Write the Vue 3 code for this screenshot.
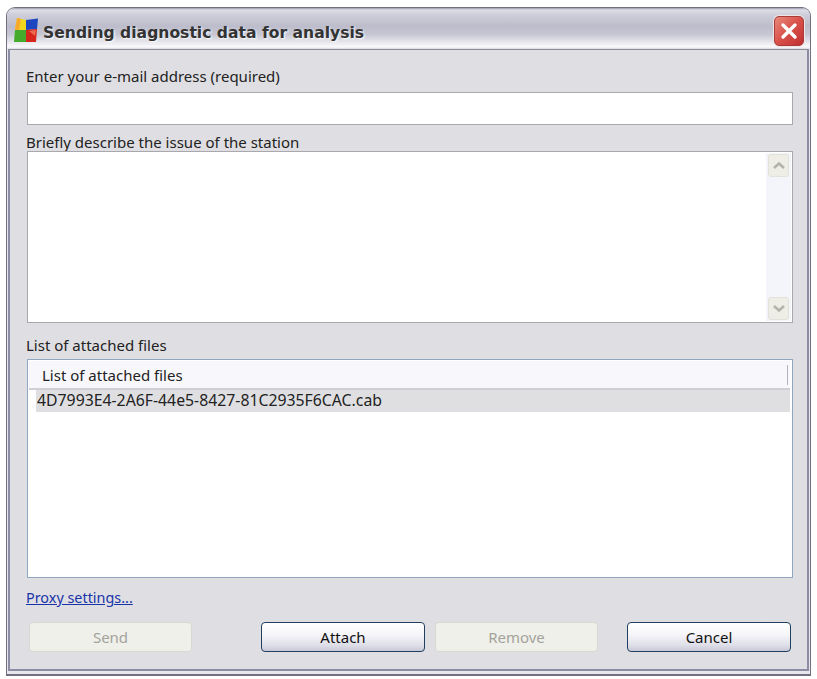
<script setup>
const files = ['4D7993E4-2A6F-44e5-8427-81C2935F6CAC.cab']
</script>

<template>
  <div class="page">
    <div class="window">
      <header class="titlebar">
        <svg class="logo" width="24" height="25" viewBox="0 0 24 25">
          <path d="M3 0 L12 2 L12 12 L1 12 Z" fill="#f2d61e" />
          <path d="M3 0 L7 1 L5 12 L1 12 Z" fill="#f7a92c" />
          <path d="M12 2 L24 0.5 L23 11 L12 12 Z" fill="#1c45c0" />
          <path d="M1 12 L12 12 L12 24 L0 24 Z" fill="#45ab2c" />
          <path d="M12 12 L23 11 L22 24 L12 24 Z" fill="#d6261c" />
          <path d="M15 13 L22 12 L21 18 Z" fill="#ee6a4c" />
        </svg>
        <span class="title">Sending diagnostic data for analysis</span>
        <button class="close" aria-label="Close">
          <svg width="22" height="22" viewBox="0 0 22 22">
            <path d="M5 5 L17 17 M17 5 L5 17" stroke="#fff" stroke-width="3.4" stroke-linecap="round" />
          </svg>
        </button>
      </header>

      <main class="body">
        <label class="label first">Enter your e-mail address (required)</label>
        <input class="field email" type="text" />

        <label class="label second">Briefly describe the issue of the station</label>
        <div class="field memo">
          <div class="scroll">
            <span class="scrollbtn">
              <svg width="14" height="9" viewBox="0 0 14 9"><path d="M2 7 L7 2.5 L12 7" fill="none" stroke="#b4b4ac" stroke-width="2.6" /></svg>
            </span>
            <span class="scrollbtn">
              <svg width="14" height="9" viewBox="0 0 14 9"><path d="M2 2 L7 6.5 L12 2" fill="none" stroke="#b4b4ac" stroke-width="2.6" /></svg>
            </span>
          </div>
        </div>

        <label class="label third">List of attached files</label>
        <div class="list">
          <div class="listhead"><span>List of attached files</span><i class="headsep"></i></div>
          <div v-for="f in files" :key="f" class="row">{{ f }}</div>
        </div>

        <a class="proxy" href="#">Proxy settings...</a>

        <div class="actions">
          <button class="btn" disabled>Send</button>
          <button class="btn active attach">Attach</button>
          <button class="btn remove" disabled>Remove</button>
          <button class="btn active cancel">Cancel</button>
        </div>
      </main>
    </div>
  </div>
</template>

<style>
html, body { margin: 0; background: #fff; }
</style>

<style scoped>
.page {
  width: 817px;
  height: 679px;
  padding: 7px 6px 3px;
  box-sizing: border-box;
  background: #fff;
  font-family: "Noto Sans", "Open Sans", sans-serif;
  font-size: 15px;
  color: #222;
}
.window {
  height: 669px;
  box-sizing: border-box;
  display: flex;
  flex-direction: column;
  border: 1px solid #70707e;
  border-bottom-width: 2px;
  border-radius: 9px 9px 0 0;
  overflow: hidden;
  background: #e6e6ec;
}
.titlebar {
  height: 41px;
  flex: none;
  box-sizing: border-box;
  display: flex;
  align-items: center;
  padding: 9px 6px 0 7px;
  background: linear-gradient(#9c9cae 0, #dedee6 2px, #d0d0dc 6px, #bcbccb 18px, #c6c6d3 26px, #e6e6ec 34px, #fbfbfd 39px, #d8d8e0 41px);
}
.logo { flex: none; margin-bottom: 6px; }
.title {
  margin-left: 5px;
  font-family: "DejaVu Sans", sans-serif;
  font-weight: 700;
  font-size: 15.6px;
  color: #333;
  text-shadow: 1px 1px 2px #fff;
}
.close {
  margin-left: auto;
  margin-bottom: 4px;
  width: 30px;
  height: 30px;
  padding: 0;
  display: flex;
  align-items: center;
  justify-content: center;
  border: 1px solid #a83a3a;
  border-radius: 5px;
  background: linear-gradient(135deg, #e8897a, #d9504a 50%, #bf3030);
  box-shadow: 0 0 0 1px #f0e4e4;
}
.body {
  flex: 1;
  min-height: 0;
  display: flex;
  flex-direction: column;
  margin: 0 1px 3px;
  padding: 0 0 0 17px;
  border: 2px solid #8c8ca4;
  border-top: 1px solid #8c8c98;
  background: #dfdfe3;
}
.label {
  display: block;
  height: 20px;
  line-height: 20px;
  color: #222;
  margin-left: -1px;
}
.first { margin-top: 16px; }
.second { margin-top: 7px; }
.third { margin-top: 12px; }
.field {
  display: block;
  box-sizing: border-box;
  margin: 0;
  border: 1px solid #a9a9ad;
  background: #fff;
  outline: none;
}
.email { width: 766px; height: 33px; margin-top: 6px; }
.memo {
  width: 766px;
  height: 172px;
  margin-top: -1px;
  display: flex;
  justify-content: flex-end;
  padding: 1px;
}
.scroll {
  width: 25px;
  display: flex;
  flex-direction: column;
  justify-content: space-between;
  align-items: center;
  padding: 1px 0;
  background: #f4f4fb;
}
.scrollbtn {
  width: 21px;
  height: 23px;
  display: flex;
  align-items: center;
  justify-content: center;
  border: 1px solid #e2e2da;
  border-radius: 3px;
  background: #eeeee6;
  box-sizing: border-box;
}
.list {
  width: 766px;
  height: 219px;
  margin-top: 4px;
  box-sizing: border-box;
  border: 1px solid #8fa8c0;
  background: #fff;
  padding: 1px 2px 0 1px;
}
.listhead {
  height: 29px;
  box-sizing: border-box;
  display: flex;
  align-items: center;
  justify-content: space-between;
  padding: 0 2px 0 13px;
  background: #f8f8fc;
  border-bottom: 2px solid #cfcfd6;
}
.headsep {
  width: 1px;
  height: 20px;
  background: #b5b5bd;
}
.row {
  height: 22px;
  line-height: 21px;
  margin-left: 7px;
  padding-left: 1px;
  background: #dfdfe2;
  font-size: 15.8px;
  color: #222;
}
.proxy {
  margin-top: 10px;
  height: 20px;
  line-height: 20px;
  align-self: flex-start;
  margin-left: -1px;
  font-size: 14.4px;
  color: #1a33a8;
  text-decoration: underline;
}
.actions {
  display: flex;
  margin-top: 14px;
  padding-left: 2px;
}
.btn {
  width: 163px;
  height: 30px;
  padding: 0;
  box-sizing: border-box;
  font: inherit;
  border-radius: 4px;
  color: #a3a39c;
  background: #f0f0ea;
  border: 1px solid #d8d8d2;
}
.active {
  color: #111;
  border: 1px solid #1f4060;
  background: linear-gradient(#fff 0, #f6f6fa 40%, #dedee8 80%, #c8c8d8 100%);
}
.attach { margin-left: 69px; width: 164px; }
.remove { margin-left: 10px; }
.cancel { margin-left: 29px; width: 164px; }
</style>
